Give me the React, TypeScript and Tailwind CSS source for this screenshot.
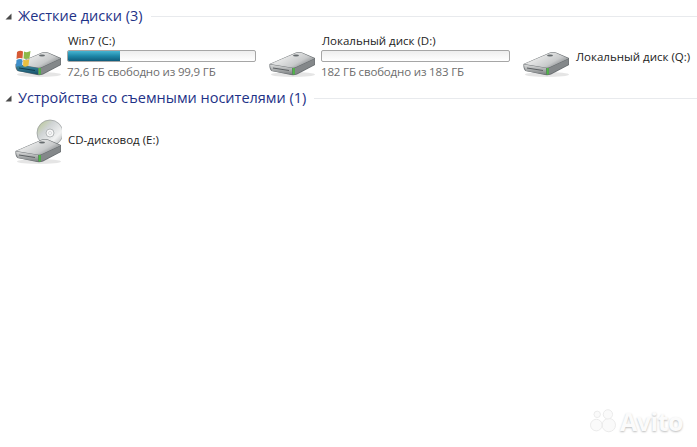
import { ReactNode } from 'react'

const font = "font-['Open_Sans','Noto_Sans',sans-serif]"

function DriveBody({ id, teal }: { id: string; teal?: boolean }) {
  return (
    <>
      <defs>
        <linearGradient id={`${id}-top`} x1="0" y1="0" x2="1" y2="0.6">
          <stop offset="0" stopColor="#7d8183" />
          <stop offset="0.4" stopColor="#e4e5e5" />
          <stop offset="0.75" stopColor="#c8cacb" />
          <stop offset="1" stopColor="#85898b" />
        </linearGradient>
        <linearGradient id={`${id}-front`} x1="0" y1="0" x2="0" y2="1">
          <stop offset="0" stopColor={teal ? '#3f8ea4' : '#dcdddd'} />
          <stop offset="1" stopColor={teal ? '#174f68' : '#7c8082'} />
        </linearGradient>
      </defs>
      <ellipse cx="25" cy="30.5" rx="22" ry="2.5" fill="#000" opacity="0.1" />
      <path d="M1.5 20 L28 8.5 Q31 7.5 34 8.5 L47 14 L47 21 L29 30.5 Q26 31.5 23 31 L3.5 27 Q1 25 1.5 20Z" fill="#666b6e" />
      <path d="M2 20 L28 9 Q31 8 34 9 L46.5 14.5 L28 23 Q26 24 23 23.5 Z" fill={`url(#${id}-top)`} />
      <path d="M2 20.5 L24 24 L24 30.5 L4 27 Q2 25 2 20.5Z" fill={`url(#${id}-front)`} />
      <path d="M27 24 L46.5 15 L46.5 20.5 L29 29.5 L27 30Z" fill="#84888a" />
      <path d="M5 24 L21 26.5" stroke={teal ? '#0f3e50' : '#5c6063'} strokeWidth="1" />
      <rect x="24.6" y="24" width="2.2" height="6.5" fill="#4fb947" />
      <ellipse cx="28" cy="11.5" rx="3" ry="1" fill="#666b6e" />
    </>
  )
}

function WinDrive() {
  return (
    <svg width="48" height="34" viewBox="0 0 48 34" className="shrink-0 mt-[7px]">
      <DriveBody id="win" teal />
      <path d="M3 8 Q6 6 9 7.5 L8.5 14.5 Q5.5 13.5 2.5 15Z" fill="#d65a35" />
      <path d="M10 7.5 Q13 9 16.5 7 L15.5 14 Q12.5 15.5 9.5 14.5Z" fill="#8db94a" />
      <path d="M2.5 16 Q5.5 14.5 8.4 15.5 L8 22 Q5 21 2 23Z" fill="#3f8fca" />
      <path d="M9.4 15.5 Q12.5 17 15.3 15 L14.5 21.5 Q11.5 23.5 9 22Z" fill="#e9bf3f" />
    </svg>
  )
}

function PlainDrive({ id }: { id: string }) {
  return (
    <svg width="48" height="34" viewBox="0 0 48 34" className="shrink-0 mt-[7px]">
      <DriveBody id={id} />
    </svg>
  )
}

function CdDrive() {
  return (
    <svg width="48" height="48" viewBox="0 0 48 48" className="shrink-0">
      <defs>
        <linearGradient id="cd-disc" x1="0" y1="0" x2="1" y2="1">
          <stop offset="0" stopColor="#b5c788" />
          <stop offset="0.35" stopColor="#cfd3d4" />
          <stop offset="0.7" stopColor="#f1f2f2" />
          <stop offset="1" stopColor="#a3a7a9" />
        </linearGradient>
      </defs>
      <circle cx="36" cy="17" r="13" fill="url(#cd-disc)" stroke="#94989a" strokeWidth="0.7" />
      <circle cx="36" cy="17" r="4" fill="#f7f7f7" stroke="#a5a9ab" strokeWidth="0.8" />
      <circle cx="36" cy="17" r="1.5" fill="#fff" stroke="#b5b8ba" strokeWidth="0.5" />
      <g transform="translate(0 15)">
        <DriveBody id="cd" />
      </g>
    </svg>
  )
}

function GroupHeader({ title, count }: { title: string; count: number }) {
  return (
    <div className="flex items-center h-[20px] pl-[5px]">
      <svg width="7" height="7" viewBox="0 0 7 7" className="mr-[6px] shrink-0">
        <path d="M6.5 0.5 V6.5 H0.5Z" fill="#4a4a4a" />
      </svg>
      <span className="text-[14.5px] leading-[20px] text-[#1e3287] whitespace-nowrap">
        {title} ({count})
      </span>
      <div className="flex-1 h-px bg-[#e8eaed] ml-2" />
    </div>
  )
}

function DiskTile({
  icon,
  name,
  free,
  used,
}: {
  icon: ReactNode
  name: string
  free?: string
  used?: number
}) {
  return (
    <div className="w-[254px] flex items-center shrink-0">
      <div className="w-[53px] flex justify-start">{icon}</div>
      {free ? (
        <div className="w-[189px]">
          <div className="text-[11.5px] pl-px leading-[16px] text-[#1c1c1c] -mt-[2px]">{name}</div>
          <div className="h-[12px] border border-[#a6a6a6] rounded-[2px] bg-gradient-to-b from-[#eeeeee] to-white overflow-hidden mt-px">
            <div
              className="h-full bg-gradient-to-b from-[#45b5d2] via-[#1d87a8] to-[#0f5c7c]"
              style={{ width: `${used}%` }}
            />
          </div>
          <div className="text-[11.5px] tracking-[-0.16px] leading-[16px] text-[#6d6d6d] mt-[2px]">{free}</div>
        </div>
      ) : (
        <span className="text-[11.5px] pl-px leading-[16px] text-[#1c1c1c] whitespace-nowrap">{name}</span>
      )}
    </div>
  )
}

function Watermark() {
  return (
    <div className="absolute right-[14px] bottom-[12px] flex items-center gap-[3px]">
      <svg width="28" height="25" viewBox="0 0 31 28">
        <g fill="#fafafa" stroke="#e8e8e8" strokeWidth="1">
          <circle cx="22" cy="18" r="7.5" />
          <circle cx="8" cy="18" r="6.5" />
          <circle cx="21" cy="6" r="5.2" />
          <circle cx="9" cy="6" r="3.6" />
        </g>
      </svg>
      <span className="text-[25px] leading-[28px] font-bold text-[#fbfbfb] tracking-[-0.5px] [text-shadow:0_1px_2px_rgba(0,0,0,0.26)]">
        Avito
      </span>
    </div>
  )
}

export default function App() {
  return (
    <div className={`relative w-[697px] h-[447px] bg-white overflow-hidden ${font}`}>
      <div className="pt-[6px]">
        <GroupHeader title="Жесткие диски" count={3} />
        <div className="flex items-center h-[52px] pl-[14px] mt-[5px]">
          <DiskTile icon={<WinDrive />} name="Win7 (C:)" free="72,6 ГБ свободно из 99,9 ГБ" used={28} />
          <DiskTile icon={<PlainDrive id="d" />} name="Локальный диск (D:)" free="182 ГБ свободно из 183 ГБ" used={0} />
          <DiskTile icon={<PlainDrive id="q" />} name="Локальный диск (Q:)" />
        </div>
        <div className="mt-[5px]">
          <GroupHeader title="Устройства со съемными носителями" count={1} />
        </div>
        <div className="flex items-center h-[48px] pl-[14px] mt-[8px]">
          <DiskTile icon={<CdDrive />} name="CD-дисковод (E:)" />
        </div>
      </div>
      <Watermark />
    </div>
  )
}
